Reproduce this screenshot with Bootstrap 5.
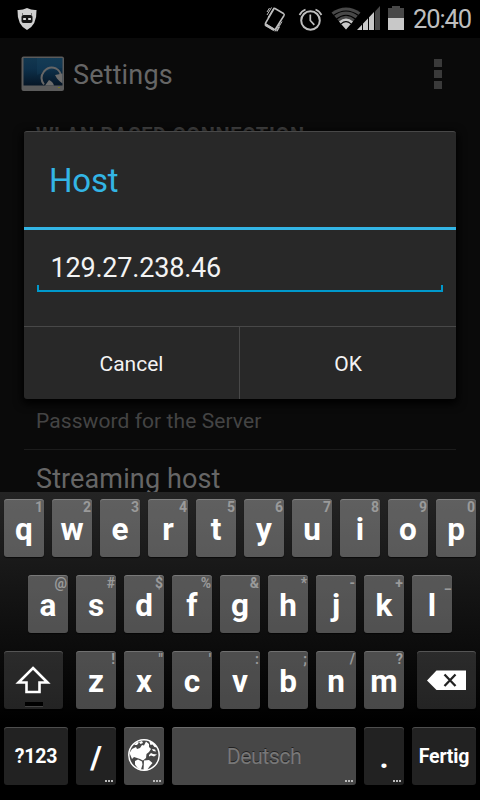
<!DOCTYPE html>
<html lang="en">
<head>
<meta charset="utf-8">
<meta name="viewport" content="width=device-width, initial-scale=1">
<title>Settings</title>
<link href="https://cdn.jsdelivr.net/npm/bootstrap@5.3.0/dist/css/bootstrap.min.css" rel="stylesheet">
<style>
body{background:#000;font-family:Roboto,sans-serif;line-height:1;overflow:hidden}
.screen{width:480px;height:800px;background:#0a0a0a}
.statusbar{height:38px;background:#000;color:#bebebe}
.clock{font-size:25.5px;line-height:40px;letter-spacing:-1.1px;margin-right:1px}
.actionbar{height:72px;padding:0 38px 0 21px;color:#666}
.app-title{font-size:27px;letter-spacing:.15px;padding-top:2px}
.dots i{width:8px;height:8px;background:#3a3a3a}
.dots{gap:3px}
.prefs{height:382px;padding:0 24px;color:#444}
.pref-head{font-size:20px;font-weight:700;line-height:20px;letter-spacing:.7px;padding:15px 12px 0;height:299px;white-space:nowrap}
.pref-sub{font-size:21px;line-height:24px;height:41px;letter-spacing:.08px;padding-left:12px;border-bottom:1px solid #1c1c1c}
.pref-title{font-size:27px;line-height:32px;letter-spacing:.12px;padding:13px 12px 0;color:#666}
.host-dialog{left:24px;top:131px;width:432px;height:268px;background:#282828;border-radius:3px;border-top:1px solid #484848;box-shadow:0 3px 9px 2px #000}
.dlg-title{height:98px;border-bottom:3px solid #33b5e5;color:#33b5e5;font-size:33px;padding:2px 25px 0;letter-spacing:-.2px}
.dlg-body{height:96px;padding:23px 13px 0}
.host-input{height:39px;padding-left:13.5px;font-size:27px;line-height:30px;letter-spacing:-.2px;color:#f3f3f3;border-bottom:2px solid #0099cc}
.host-input::before,.host-input::after{content:"";position:absolute;bottom:0;width:2px;height:5px;background:#0099cc}
.host-input::before{left:0}
.host-input::after{right:0}
.dlg-actions{height:73px;border-top:1px solid #484848}
.dlg-btn{background:none;border:0;color:#f3f3f3;font-size:21px;width:215px;padding:2px 0 0}
.dlg-btn+.dlg-btn{border-left:1px solid #484848;width:217px}
.keyboard{height:308px;background:linear-gradient(#242424,#000 75%);padding:7px 4px 0;z-index:2}
.keys{height:58px;margin-bottom:18px;gap:8px}
.keys-mid{padding:0 24px}
.keycap{width:40px;height:58px;border-radius:3px;background:rgba(255,255,255,.28);box-shadow:inset 0 1px rgba(255,255,255,.2),0 1px 1px rgba(0,0,0,.6);color:#fff;font-weight:700;font-size:31.5px;line-height:61px;text-align:center;flex:none}
.keycap.dark-key{background:rgba(255,255,255,.135)}
.keycap small{position:absolute;right:1px;top:2px;font-size:14px;line-height:13px;color:#9a9a9a;font-weight:700}
.wide-side{width:59px}
.gap-right{margin-right:5px}
.gap-left{margin-left:5px}
.keycap.fn-key{width:64px;font-size:19.5px;line-height:60px;letter-spacing:-.2px}
.keycap.space-key{width:184px;font-size:21.5px;font-weight:400;line-height:59px;letter-spacing:-.6px;color:#777;text-shadow:0 -1px #222}
.more::after{content:"";position:absolute;right:3px;bottom:3px;width:8px;height:2px;background:repeating-linear-gradient(90deg,#bbb 0 2px,transparent 2px 3px)}
svg{display:block;flex:none}
</style>
</head>
<body>
<div class="screen position-relative d-flex flex-column overflow-hidden">
  <header class="statusbar d-flex align-items-center">
    <svg width="480" height="38" viewBox="0 0 480 38" class="position-absolute top-0 start-0">
      <path d="M27 8Q32 10.500 36.500 10Q37 25 27 30Q17 25 17.500 10Q22 10.500 27 8Z" fill="#d0d0d0"/>
      <path d="M22.500 13v2M31.500 13v2" stroke="#777"/>
      <rect x="21.500" y="15" width="11" height="8" rx="2" fill="#151515"/>
      <path d="M23.200 18h2.700v2h-2.700zm5 0h2.700v2h-2.700z" fill="#ddd"/>
      <g fill="none" stroke="#bebebe">
        <path d="M275 8.500l8.500 5q1.200.8.500 2l-8.500 13.500q-.7 1-1.800.4l-7.500-4.500q-1.300-.8-.6-1.900l8-13.700q.5-1.200 1.400-.8z" stroke-width="1.500"/>
        <path d="M265.500 23.500l9 5.500-1 1.500-8.500-5z" fill="#bebebe"/>
        <path d="M274 7.500l-6 10M271.500 7.500l-4.500 7.500M269.500 8l-2.500 4M282 21.500l-5.500 9.500M280 23l-5 8.500M279.500 27l-2.500 4.500" stroke-width="1"/>
        <circle cx="310.500" cy="20.500" r="9.300" stroke-width="2"/>
        <path d="M310.300 14.500v6l4 4.300" stroke-width="1.700"/>
        <path d="M299.500 15q2-4 6-5.500M315.500 9.500q4 1.500 6 5.500" stroke-width="1.700"/>
      </g>
      <path d="M331.500 12.500Q346 2.500 360.500 12.500L346 29.500Z" fill="#484848"/>
      <path d="M339 21.500Q346 15.500 353 21.500L346 29.500Z" fill="#c8c8c8"/>
      <path d="M333.500 15.500Q346 6.500 358.500 15.500M336.500 19Q346 11.500 355.500 19M341 23.800Q346 19.500 351 23.800" fill="none" stroke="#000" stroke-width="1.100"/>
      <path d="M357 30L374.500 11.500V30Z" fill="#c8c8c8"/>
      <path d="M375 11.500L380 6V30H375Z" fill="#484848"/>
      <path d="M362.500 23v7M368.500 16v14M374.500 10v20" stroke="#000" stroke-width="1"/>
      <path d="M388 8h4V6h8v2h4v10h-16z" fill="#484848"/>
      <path d="M388 18h16v12h-16z" fill="#c8c8c8"/>
    </svg>
    <span class="clock ms-auto pe-2">20:40</span>
  </header>
  <div class="actionbar d-flex align-items-center">
    <svg width="44" height="36" viewBox="0 0 44 36">
      <defs><linearGradient id="scr" x1="0" y1="0" x2="0" y2="1"><stop offset="0" stop-color="#123750"/><stop offset=".4" stop-color="#0d304a"/><stop offset="1" stop-color="#061626"/></linearGradient></defs>
      <rect x=".500" y=".500" width="42.500" height="34.500" rx="2" fill="#5b5b5b"/>
      <rect x="2.500" y="2" width="39" height="27.500" fill="url(#scr)"/>
      <path d="M16 2h25v10q-12 1-25 7z" fill="#1b4c69" opacity=".25"/>
      <path d="M23 28.500Q18 22 23 15.500Q28 9.500 35 12.500Q39.500 15 40 20" fill="none" stroke="#666" stroke-width="2"/>
      <path d="M24 29.500l4-5.500q4 1.500 5 5.500zM34 19l7.500-1.500v10q-4-3-5.500-5z" fill="#6c6c6c"/>
      <path d="M37 31.500h2" stroke="#777a20"/>
    </svg>
    <span class="app-title ms-2">Settings</span>
    <div class="dots d-flex flex-column ms-auto"><i></i><i></i><i></i></div>
  </div>
  <main class="prefs">
    <div class="pref-head">WLAN BASED CONNECTION</div>
    <div class="pref-sub">Password for the Server</div>
    <div class="pref-title">Streaming host</div>
  </main>
  <section class="keyboard position-relative">
    <div class="keys d-flex">
      <div class="keycap position-relative">q<small>1</small></div><div class="keycap position-relative">w<small>2</small></div><div class="keycap position-relative">e<small>3</small></div><div class="keycap position-relative">r<small>4</small></div><div class="keycap position-relative">t<small>5</small></div><div class="keycap position-relative">y<small>6</small></div><div class="keycap position-relative">u<small>7</small></div><div class="keycap position-relative">i<small>8</small></div><div class="keycap position-relative">o<small>9</small></div><div class="keycap position-relative">p<small>0</small></div>
    </div>
    <div class="keys keys-mid d-flex">
      <div class="keycap position-relative">a<small>@</small></div><div class="keycap position-relative">s<small>#</small></div><div class="keycap position-relative">d<small>$</small></div><div class="keycap position-relative">f<small>%</small></div><div class="keycap position-relative">g<small>&amp;</small></div><div class="keycap position-relative">h<small>*</small></div><div class="keycap position-relative">j<small>-</small></div><div class="keycap position-relative">k<small>+</small></div><div class="keycap position-relative">l<small>_</small></div>
    </div>
    <div class="keys d-flex">
      <div class="keycap dark-key wide-side gap-right">
        <svg width="59" height="58" viewBox="0 0 59 58"><path d="M29 17L43.500 31.500H35.500V41H22.500V31.500H14.500Z" fill="none" stroke="#fff" stroke-width="2.600"/><path d="M21 51h18v4H21z" fill="#000"/><path d="M21 55.500h18" stroke="#444"/></svg>
      </div>
      <div class="keycap position-relative">z<small>!</small></div><div class="keycap position-relative">x<small>"</small></div><div class="keycap position-relative">c<small>'</small></div><div class="keycap position-relative">v<small>:</small></div><div class="keycap position-relative">b<small>;</small></div><div class="keycap position-relative">n<small>/</small></div><div class="keycap position-relative">m<small>?</small></div>
      <div class="keycap dark-key wide-side gap-left">
        <svg width="59" height="58" viewBox="0 0 59 58"><path d="M10 29.500L19.500 19.500H49V39H19.500Z" fill="#fff"/><path d="M27.500 23.500l11 11.500M38.500 23.500l-11 11.500" stroke="#222" stroke-width="2.300"/></svg>
      </div>
    </div>
    <div class="keys d-flex">
      <div class="keycap dark-key fn-key">?123</div>
      <div class="keycap dark-key more position-relative">/</div>
      <div class="keycap more position-relative">
        <svg width="40" height="58" viewBox="0 0 40 58"><circle cx="20" cy="28" r="15.200" fill="none" stroke="#fff" stroke-width="1.500"/>
        <path d="M5.500 26L8 22L12 20L13 22L16 21L18 18L20 18.500L22 14.500L25 17L25 20L27 22L25 25L22.500 27L22 31L19 33.500L16 32L13 31L10 30L8 32Z" fill="#fff"/>
        <path d="M11 34l3-1.500 4 2 .5 3-1.500 5-3-1-3-4zM20 33.500l5-.5 3.500 3-3 3.500-2.500 3.500-3.500.500zM10 18l3-3 2 .5-2 2.500zM15 15l3-1 1 2-2.500 1zM25 13.500l5 3 3 4-2.500-.5-2-2.500-2 .5zM25 28l2-2 2 1 4 .5-3 2-3-1-2 1zM28 22l3 .5 1 2-3-.5z" fill="#fff"/></svg>
      </div>
      <div class="keycap space-key more position-relative">Deutsch</div>
      <div class="keycap dark-key more position-relative">.</div>
      <div class="keycap dark-key fn-key">Fertig</div>
    </div>
  </section>
  <div class="host-dialog position-absolute overflow-hidden">
    <div class="dlg-title d-flex align-items-center">Host</div>
    <div class="dlg-body"><div class="host-input position-relative">129.27.238.46</div></div>
    <div class="dlg-actions d-flex"><button class="dlg-btn">Cancel</button><button class="dlg-btn">OK</button></div>
  </div>
</div>
<script src="https://cdn.jsdelivr.net/npm/bootstrap@5.3.0/dist/js/bootstrap.bundle.min.js"></script>
</body>
</html>
